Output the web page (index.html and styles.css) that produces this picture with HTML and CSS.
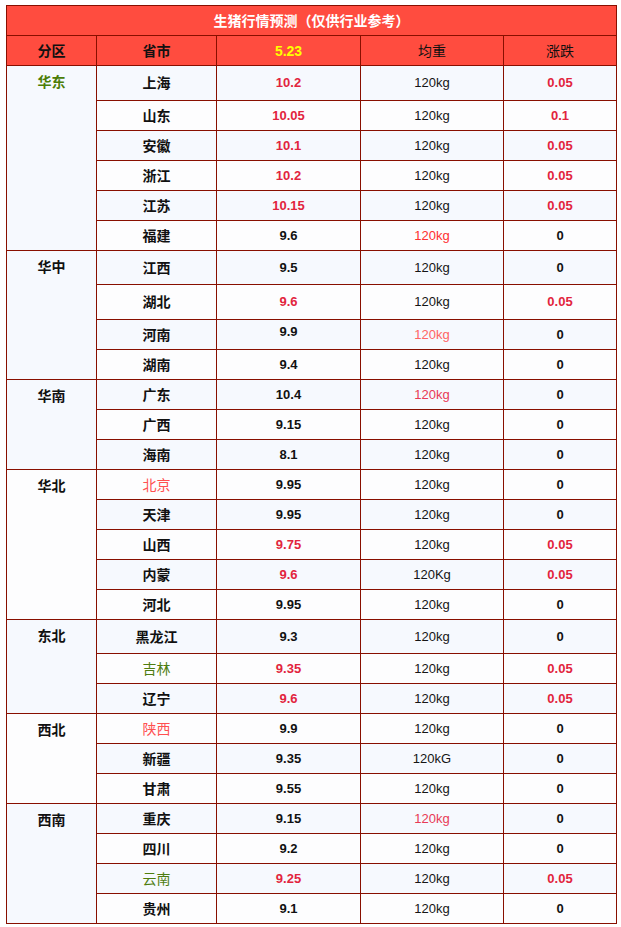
FILE: index.html
```html
<!DOCTYPE html>
<html lang="zh-CN">
<head>
<meta charset="utf-8">
<title>生猪行情预测</title>
<link rel="stylesheet" href="styles.css">
</head>
<body>
<table class="grid">
  <colgroup>
    <col class="c1"><col class="c2"><col class="c3"><col class="c4"><col class="c5">
  </colgroup>
  <tr class="title-row"><td colspan="5" class="title">生猪行情预测（仅供行业参考）</td></tr>
  <tr class="head-row">
    <td class="b">分区</td><td class="b">省市</td><td class="b date">5.23</td><td>均重</td><td>涨跌</td>
  </tr>

  <tr class="odd h35"><td rowspan="6" class="zone green">华东</td><td class="p">上海</td><td class="n red">10.2</td><td class="w">120kg</td><td class="n red">0.05</td></tr>
  <tr class="even"><td class="p">山东</td><td class="n red">10.05</td><td class="w">120kg</td><td class="n red">0.1</td></tr>
  <tr class="odd"><td class="p">安徽</td><td class="n red">10.1</td><td class="w">120kg</td><td class="n red">0.05</td></tr>
  <tr class="even"><td class="p">浙江</td><td class="n red">10.2</td><td class="w">120kg</td><td class="n red">0.05</td></tr>
  <tr class="odd"><td class="p">江苏</td><td class="n red">10.15</td><td class="w">120kg</td><td class="n red">0.05</td></tr>
  <tr class="even"><td class="p">福建</td><td class="n">9.6</td><td class="w w-red">120kg</td><td class="n">0</td></tr>

  <tr class="odd h34"><td rowspan="4" class="zone">华中</td><td class="p">江西</td><td class="n">9.5</td><td class="w">120kg</td><td class="n">0</td></tr>
  <tr class="even h35"><td class="p">湖北</td><td class="n red">9.6</td><td class="w">120kg</td><td class="n red">0.05</td></tr>
  <tr class="odd"><td class="p">河南</td><td class="n up">9.9</td><td class="w w-salmon">120kg</td><td class="n">0</td></tr>
  <tr class="even"><td class="p">湖南</td><td class="n">9.4</td><td class="w">120kg</td><td class="n">0</td></tr>

  <tr class="odd"><td rowspan="3" class="zone">华南</td><td class="p">广东</td><td class="n">10.4</td><td class="w w-pink">120kg</td><td class="n">0</td></tr>
  <tr class="even"><td class="p">广西</td><td class="n">9.15</td><td class="w">120kg</td><td class="n">0</td></tr>
  <tr class="odd"><td class="p">海南</td><td class="n">8.1</td><td class="w">120kg</td><td class="n">0</td></tr>

  <tr class="even"><td rowspan="5" class="zone">华北</td><td class="p salmon">北京</td><td class="n">9.95</td><td class="w">120kg</td><td class="n">0</td></tr>
  <tr class="odd"><td class="p">天津</td><td class="n">9.95</td><td class="w">120kg</td><td class="n">0</td></tr>
  <tr class="even"><td class="p">山西</td><td class="n red">9.75</td><td class="w">120kg</td><td class="n red">0.05</td></tr>
  <tr class="odd"><td class="p">内蒙</td><td class="n red">9.6</td><td class="w">120Kg</td><td class="n red">0.05</td></tr>
  <tr class="even"><td class="p">河北</td><td class="n">9.95</td><td class="w">120kg</td><td class="n">0</td></tr>

  <tr class="odd h34"><td rowspan="3" class="zone">东北</td><td class="p">黑龙江</td><td class="n">9.3</td><td class="w">120kg</td><td class="n">0</td></tr>
  <tr class="even"><td class="p green-p">吉林</td><td class="n red">9.35</td><td class="w">120kg</td><td class="n red">0.05</td></tr>
  <tr class="odd"><td class="p">辽宁</td><td class="n red">9.6</td><td class="w">120kg</td><td class="n red">0.05</td></tr>

  <tr class="even"><td rowspan="3" class="zone">西北</td><td class="p salmon">陕西</td><td class="n">9.9</td><td class="w">120kg</td><td class="n">0</td></tr>
  <tr class="odd"><td class="p">新疆</td><td class="n">9.35</td><td class="w">120kG</td><td class="n">0</td></tr>
  <tr class="even"><td class="p">甘肃</td><td class="n">9.55</td><td class="w">120kg</td><td class="n">0</td></tr>

  <tr class="odd"><td rowspan="4" class="zone">西南</td><td class="p">重庆</td><td class="n">9.15</td><td class="w w-pink">120kg</td><td class="n">0</td></tr>
  <tr class="even"><td class="p">四川</td><td class="n">9.2</td><td class="w">120kg</td><td class="n">0</td></tr>
  <tr class="odd"><td class="p green-p">云南</td><td class="n red">9.25</td><td class="w">120kg</td><td class="n red">0.05</td></tr>
  <tr class="even"><td class="p">贵州</td><td class="n">9.1</td><td class="w">120kg</td><td class="n">0</td></tr>
</table>
</body>
</html>
```
FILE: styles.css
```css
html, body {
  margin: 0;
  padding: 0;
  background: #ffffff;
}
body {
  padding: 5px 6px;
  font-family: "Liberation Sans", "Noto Sans CJK SC", sans-serif;
  color: #111;
}
.grid {
  border-collapse: collapse;
  table-layout: fixed;
  width: 610px;
}
.c1 { width: 90px; }
.c2 { width: 120px; }
.c3 { width: 144px; }
.c4 { width: 143px; }
.c5 { width: 113px; }

.grid td {
  box-sizing: border-box;
  border: 1px solid #880f00;
  padding: 0;
  height: 30px;
  text-align: center;
  vertical-align: middle;
  font-size: 14px;
  line-height: 18px;
  white-space: nowrap;
}
.title-row td, .head-row td {
  background: #ff4c3f;
}
.title {
  color: #ffffff;
  font-weight: bold;
  font-size: 16px;
}
.head-row td { color: #111; font-weight: normal; }
.head-row td.b { font-weight: bold; }
.head-row td.date { color: #ffff00; font-size: 14px; }

.odd td { background: #f6f9fe; }
.even td { background: #fdfdfe; }
.grid .h35 td { height: 35px; }
.grid .h34 td { height: 34px; }
.grid .h35 td.zone, .grid .h34 td.zone { height: auto; }

.grid td.zone {
  vertical-align: top;
  padding-top: 7px;
  font-weight: bold;
  color: #111;
}
.grid td.zone.green { color: #4c7d06; }

.p { font-weight: bold; }
.p.salmon { color: #ff5050; font-weight: normal; }
.p.green-p { color: #4f7d10; font-weight: normal; }

.grid td.n {
  font-weight: bold;
  font-size: 13px;
}
.grid td.n.red { color: #e2243d; }
.grid td.n.up { padding-bottom: 5px; }

.grid td.w {
  font-size: 13px;
  color: #151515;
}
.grid td.w-red { color: #ff2f2f; }
.grid td.w-salmon { color: #ff6464; }
.grid td.w-pink { color: #e83a55; }
```
